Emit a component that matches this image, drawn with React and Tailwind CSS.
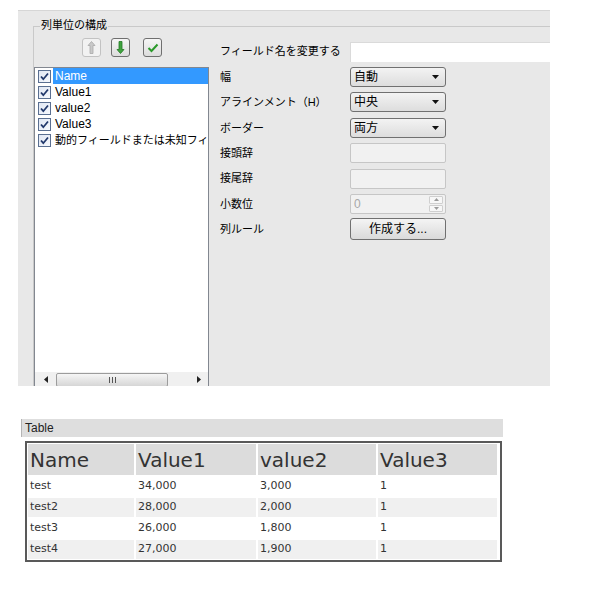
import React from 'react';

const jp = "font-['Liberation_Sans','Noto_Sans_CJK_JP',sans-serif]";

const CheckBox = () => (
  <svg width="13" height="13" viewBox="0 0 13 13" className="shrink-0">
    <defs>
      <linearGradient id="cbg" x1="0" y1="0" x2="1" y2="1">
        <stop offset="0" stopColor="#dfe6f3" />
        <stop offset="1" stopColor="#f7f9fd" />
      </linearGradient>
    </defs>
    <rect x="0.5" y="0.5" width="12" height="12" fill="url(#cbg)" stroke="#5a6f91" />
    <path d="M3 6.5 L5.3 9.2 L10 3.5" fill="none" stroke="#21386b" strokeWidth="1.8" />
  </svg>
);

const ToolButton = ({ children, disabled, className = '' }) => (
  <div
    className={`w-[19px] h-[19px] rounded-[3px] border flex items-center justify-center ${
      disabled ? 'border-[#c2c2c2] bg-[#f2f2f2]' : 'border-[#6f6f6f] bg-gradient-to-b from-[#f6f6f6] to-[#dcdcdc]'
    } ${className}`}
  >
    {children}
  </div>
);

const Dropdown = ({ value }) => (
  <div className="w-[96px] h-[20px] rounded-[3px] border border-[#707070] bg-gradient-to-b from-[#f3f3f3] to-[#dddddd] flex items-center pl-[3px] pr-[6px]">
    <span className="flex-1 text-[12px] text-black">{value}</span>
    <svg width="7" height="4" viewBox="0 0 7 4">
      <path d="M0 0 H7 L3.5 4 Z" fill="#111" />
    </svg>
  </div>
);

const Disabled = ({ children }) => (
  <div className="w-[96px] h-[20px] rounded-[2px] border border-[#c6c6c6] bg-[#f1f1f1] flex items-center">
    {children}
  </div>
);

const Row = ({ label, children }) => (
  <div className="h-[25.4px] flex items-center">
    <div className="w-[130px] text-[11px] text-black">{label}</div>
    {children}
  </div>
);

const items = ['Name', 'Value1', 'value2', 'Value3', '動的フィールドまたは未知フィールド'];

const tableRows = [
  ['test', '34,000', '3,000', '1'],
  ['test2', '28,000', '2,000', '1'],
  ['test3', '26,000', '1,800', '1'],
  ['test4', '27,000', '1,900', '1'],
];

export default function App() {
  return (
    <div className={`w-[590px] h-[596px] bg-white overflow-hidden ${jp}`}>
      {/* column settings panel */}
      <div className="ml-[18px] mt-[10px] w-[532px] h-[376px] bg-[#e8e8e8] border-t border-[#d6d6d6] overflow-hidden">
        <div className="relative ml-[15px] mt-[15px] w-[517px] h-[361px] border-l border-t border-[#c9c9c9] flex">
          <span className="absolute left-[6px] -top-[9px] px-[1px] bg-[#e8e8e8] text-[11px] leading-[14px] text-black">
            列単位の構成
          </span>

          {/* left: field list */}
          <div className="w-[175px] flex flex-col">
            <div className="mt-[11px] h-[19px] flex pl-[48px] gap-[10px]">
              <ToolButton disabled>
                <svg width="9" height="13" viewBox="0 0 9 13">
                  <path d="M4.5 0.5 L1 4.5 H3 V12.5 H6 V4.5 H8 Z" fill="#c9c9c9" stroke="#a9a9a9" strokeWidth="0.8" />
                </svg>
              </ToolButton>
              <ToolButton>
                <svg width="9" height="13" viewBox="0 0 9 13">
                  <path d="M4.5 12.5 L1 8.5 H3 V0.5 H6 V8.5 H8 Z" fill="#3fa33f" stroke="#237a23" strokeWidth="0.8" />
                </svg>
              </ToolButton>
              <ToolButton className="ml-[3px]">
                <svg width="12" height="10" viewBox="0 0 12 10">
                  <path d="M1.5 5 L4.5 8 L10.5 1.5" fill="none" stroke="#2b9a2b" strokeWidth="2" />
                </svg>
              </ToolButton>
            </div>

            <div className="mt-[10px] flex-1 border-l border-t border-r border-[#828790] bg-white flex flex-col overflow-hidden">
              {items.map((it, i) => (
                <div key={it} className="h-[16px] flex items-center">
                  <div className="ml-[3px]">
                    <CheckBox />
                  </div>
                  <div
                    className={`ml-[2px] pl-[2px] flex-1 h-[16px] flex items-center whitespace-nowrap overflow-hidden ${
                      i === 0 ? 'bg-[#3399ff] text-white' : 'text-black'
                    } ${i === 4 ? 'text-[11px]' : 'text-[12px]'}`}
                  >
                    {it}
                  </div>
                </div>
              ))}

              {/* horizontal scrollbar */}
              <div className="mt-auto h-[15px] bg-[#f0f0f0] flex items-center">
                <div className="w-[21px] flex justify-center">
                  <svg width="4" height="7" viewBox="0 0 4 7">
                    <path d="M4 0 V7 L0 3.5 Z" fill="#222" />
                  </svg>
                </div>
                <div className="w-[112px] h-[14px] rounded-[2px] border border-[#9c9c9c] bg-gradient-to-b from-[#f6f6f6] to-[#d6d6d6] flex items-center justify-center">
                  <svg width="7" height="6" viewBox="0 0 7 6">
                    <path d="M0.5 0 V6 M3.5 0 V6 M6.5 0 V6" stroke="#555" strokeWidth="1" />
                  </svg>
                </div>
                <div className="flex-1 flex justify-end pr-[7px]">
                  <svg width="4" height="7" viewBox="0 0 4 7">
                    <path d="M0 0 V7 L4 3.5 Z" fill="#222" />
                  </svg>
                </div>
              </div>
            </div>
          </div>

          {/* right: properties */}
          <div className="flex-1 pl-[11px] pt-[12px] flex flex-col">
            <Row label="フィールド名を変更する">
              <div className="w-[200px] h-[20px] bg-white border-l border-t border-[#dadada]" />
            </Row>
            <Row label="幅">
              <Dropdown value="自動" />
            </Row>
            <Row label="アラインメント（H）">
              <Dropdown value="中央" />
            </Row>
            <Row label="ボーダー">
              <Dropdown value="両方" />
            </Row>
            <Row label="接頭辞">
              <Disabled />
            </Row>
            <Row label="接尾辞">
              <Disabled />
            </Row>
            <Row label="小数位">
              <Disabled>
                <span className="flex-1 pl-[3px] text-[12px] text-[#a8a8a8]">0</span>
                <div className="w-[14px] h-[16px] mr-[2px] flex flex-col gap-[1px]">
                  <div className="flex-1 border border-[#cfcfcf] rounded-[1px] bg-[#f7f7f7] flex items-center justify-center">
                    <svg width="5" height="3" viewBox="0 0 5 3"><path d="M0 3 H5 L2.5 0 Z" fill="#9a9a9a" /></svg>
                  </div>
                  <div className="flex-1 border border-[#cfcfcf] rounded-[1px] bg-[#f7f7f7] flex items-center justify-center">
                    <svg width="5" height="3" viewBox="0 0 5 3"><path d="M0 0 H5 L2.5 3 Z" fill="#9a9a9a" /></svg>
                  </div>
                </div>
              </Disabled>
            </Row>
            <Row label="列ルール">
              <div className="w-[96px] h-[22px] rounded-[3px] border border-[#707070] bg-gradient-to-b from-[#f4f4f4] to-[#dadada] flex items-center justify-center text-[12px] text-black">
                作成する...
              </div>
            </Row>
          </div>
        </div>
      </div>

      {/* table preview */}
      <div className="mt-[33px] ml-[21px] w-[482px] h-[18px] bg-[#dedede] border-l border-[#b4b4b4] flex items-center pl-[3px] text-[12px] text-[#222]">
        Table
      </div>
      <div className="mt-[4px] ml-[25px] w-[477px] border-2 border-[#595959] p-[1px] font-['DejaVu_Sans',sans-serif] text-[#333]">
        <div className="grid grid-cols-[106px_120px_118px_119px] gap-[2px]">
          {['Name', 'Value1', 'value2', 'Value3'].map((h) => (
            <div key={h} className="h-[31px] bg-[#dcdcdc] flex items-center pl-[2px] text-[20px]">
              {h}
            </div>
          ))}
          {tableRows.map((r, ri) =>
            r.map((c, ci) => (
              <div
                key={`${ri}-${ci}`}
                className={`h-[19px] flex items-center pl-[2px] text-[11px] ${
                  ri % 2 === 1 ? 'bg-[#f0f0f0]' : 'bg-white'
                }`}
              >
                {c}
              </div>
            ))
          )}
        </div>
      </div>
    </div>
  );
}
